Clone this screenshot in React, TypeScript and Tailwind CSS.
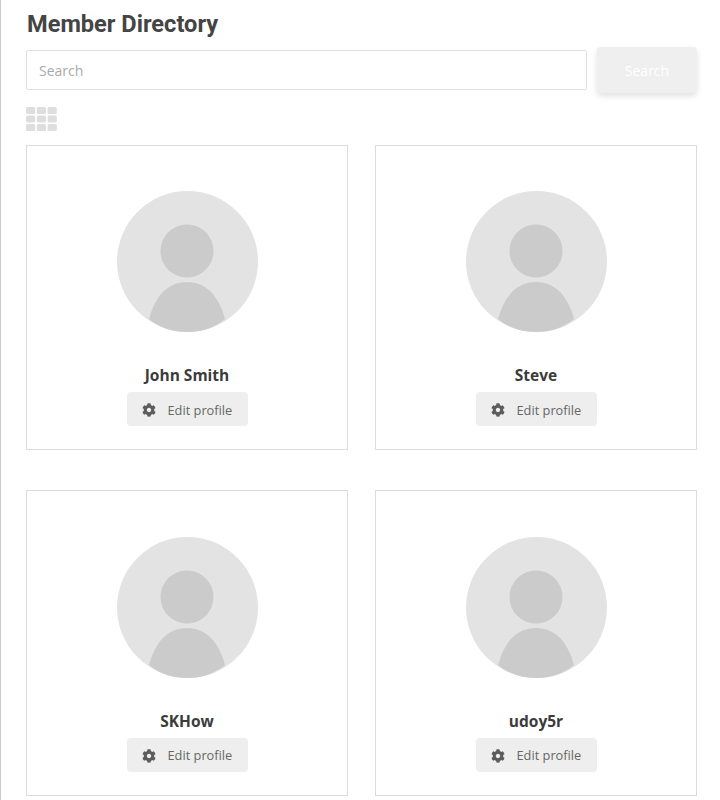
import { FaCog } from "react-icons/fa";

const MEMBERS = ["John Smith", "Steve", "SKHow", "udoy5r"];

function GridIcon() {
  const xs = [0, 10.8, 21.6];
  const ys = [0, 8.5, 17];
  return (
    <svg viewBox="0 0 31 24" className="mt-[14px] block h-[24px] w-[31px]">
      {ys.map((y) =>
        xs.map((x) => (
          <rect key={`${x}-${y}`} x={x} y={y} width="9.2" height="7" rx="1.6" fill="#dedede" />
        )),
      )}
    </svg>
  );
}

function Avatar() {
  return (
    <svg viewBox="0 0 141 141" className="block h-[141px] w-[141px]">
      <circle cx="70.5" cy="70.5" r="70.5" fill="#e3e3e3" />
      <circle cx="70" cy="60" r="26.5" fill="#cbcbcb" />
      <path
        d="M32 128 C38 106 50 91 70 91 C90 91 102 106 108 128 C97 137 84 141 70.5 141 C56 141 43 137 32 128 Z"
        fill="#cbcbcb"
      />
    </svg>
  );
}

function MemberCard({ name }: { name: string }) {
  return (
    <div className="flex h-[305.5px] flex-col items-center border border-[#dcdcdc] pt-[45.5px]">
      <Avatar />
      <p className="mt-[32px] text-[15.5px] leading-[22px] font-bold text-[#3b3b3b]">{name}</p>
      <button className="mt-[6px] flex h-[34px] w-[121px] items-center rounded-[4px] bg-[#eeeeee] pt-[2px] pl-[15px] text-[12.8px] text-[#666666]">
        <FaCog className="mr-[12px] text-[14px] text-[#5c5c5c]" />
        Edit profile
      </button>
    </div>
  );
}

export default function App() {
  return (
    <div className="h-[800px] overflow-hidden border-l border-[#cccccc] bg-white pr-[23px] pl-[25px] font-['Open_Sans',sans-serif]">
      <h1 className="pt-[9px] pl-[1px] font-['Roboto',sans-serif] text-[23.6px] leading-[30px] font-bold text-[#444444]">
        Member Directory
      </h1>
      <div className="mt-[8px] flex items-center gap-[10px]">
        <input
          placeholder="Search"
          className="h-[40px] flex-1 rounded-[2px] border border-[#e0e0e0] px-[12px] text-[14px] outline-none placeholder:text-[#aaaaaa]"
        />
        <button className="h-[46px] w-[100px] rounded-[4px] bg-[#efefef] text-[14px] text-white shadow-[0_3px_6px_rgba(0,0,0,0.12)]">
          Search
        </button>
      </div>
      <GridIcon />
      <div className="mt-[13.6px] grid grid-cols-2 gap-x-[27px] gap-y-[40px]">
        {MEMBERS.map((m) => (
          <MemberCard key={m} name={m} />
        ))}
      </div>
    </div>
  );
}
